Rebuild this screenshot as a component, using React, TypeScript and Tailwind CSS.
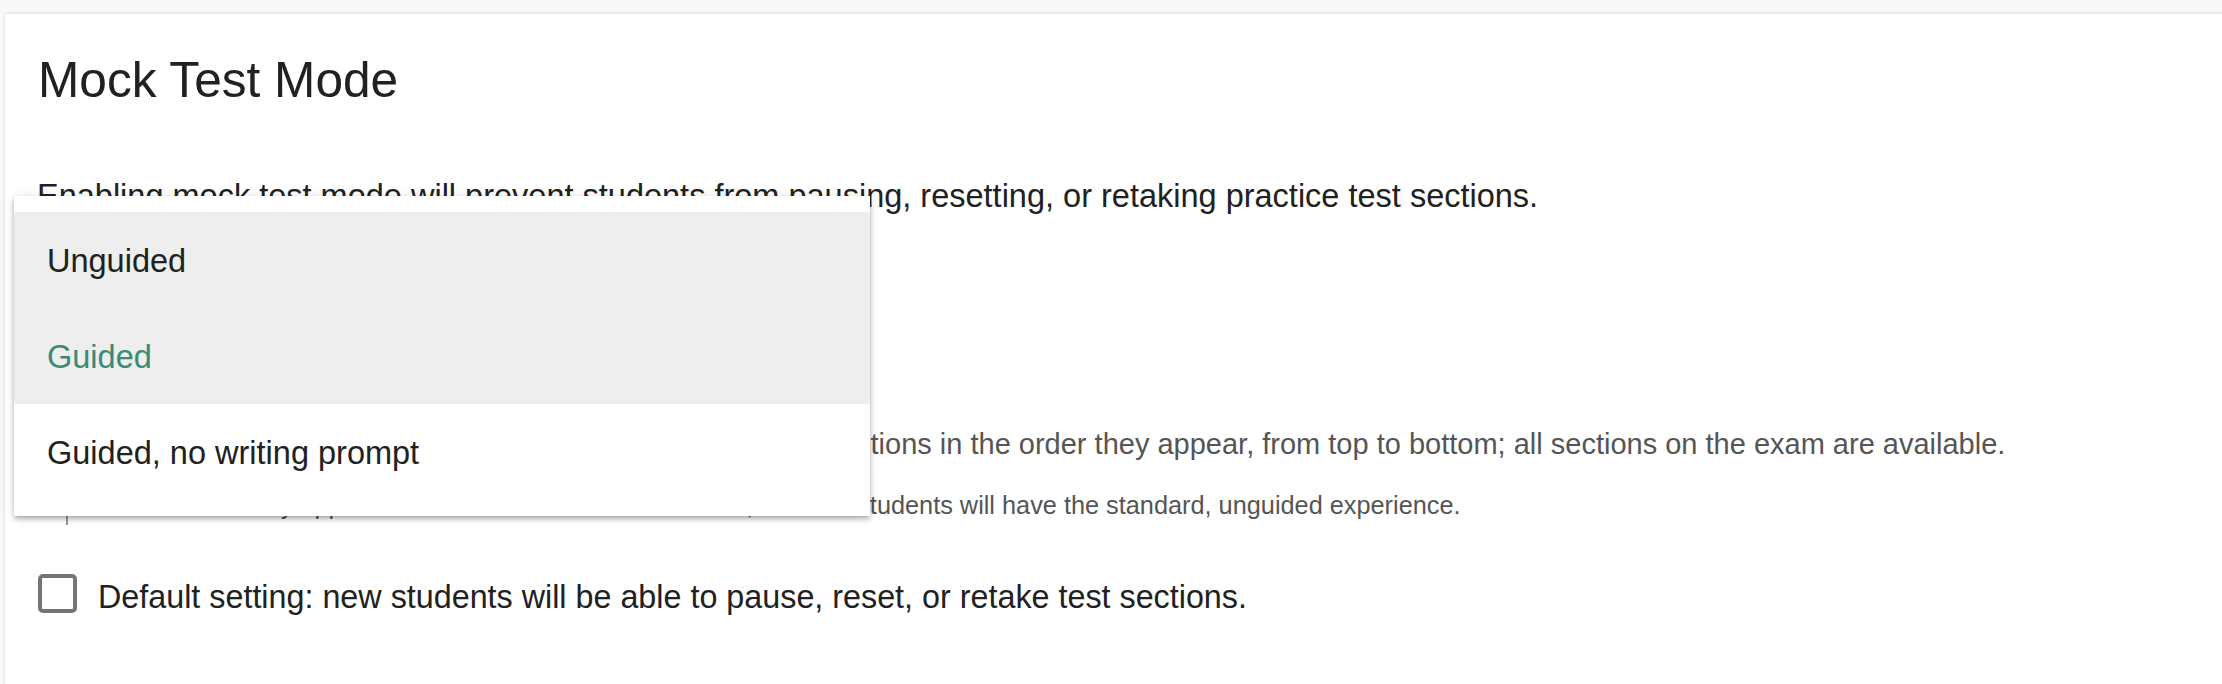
import React from "react";

const FONT = { fontFamily: '"Liberation Sans", Arial, Helvetica, sans-serif' };

const OPTIONS = [
  { label: "Unguided", active: true, selected: false },
  { label: "Guided", active: true, selected: true },
  { label: "Guided, no writing prompt", active: false, selected: false },
];

function GuidedMenu() {
  return (
    <div className="absolute left-[9px] top-[182px] z-10 w-[856px] bg-white py-[16px] shadow-[0_2px_4px_-1px_rgba(0,0,0,0.2),0_4px_5px_0_rgba(0,0,0,0.14),0_1px_10px_0_rgba(0,0,0,0.12)]">
      {OPTIONS.map((opt) => (
        <div
          key={opt.label}
          className={
            "flex h-[96px] items-center pl-[33px] pt-[2px] text-[32.5px] " +
            (opt.active ? "bg-[#eeeeee] " : "bg-white ") +
            (opt.selected ? "text-[#3a8a78]" : "text-[#212121]")
          }
        >
          {opt.label}
        </div>
      ))}
    </div>
  );
}

export default function App() {
  return (
    <div
      className="h-[684px] w-full overflow-hidden bg-[#f8f8f8] pt-[14px] pl-[5px]"
      style={FONT}
    >
      <section className="relative mr-[-20px] h-[700px] bg-white pl-[32px] pt-[38px] shadow-[0_0_3px_rgba(0,0,0,0.16)]">
        <h1 className="ml-[1px] text-[49.6px] leading-[56px] font-normal text-[#212121]">
          Mock Test Mode
        </h1>

        <p className="mt-[64px] text-[32.5px] leading-[48px] text-[#212121]">
          Enabling mock test mode will prevent students from pausing, resetting, or retaking practice test sections.
        </p>

        {/* select field, covered by the open menu */}
        <div className="h-[202px] pt-[24px]">
          <div className="text-[24px] leading-[32px] text-[#757575]">Guided mode</div>
          <div className="mt-[8px] w-[600px] border-b-2 border-[#9e9e9e] pb-[10px] text-[32.5px] leading-[48px] text-[#212121]">
            Guided
          </div>
        </div>

        <p className="pl-[387px] text-[29px] leading-[44px] text-[#555555]">
          Guided: students will complete sections in the order they appear, from top to bottom; all sections on the exam are available.
        </p>

        <p className="mt-[19px] ml-[29px] border-l-2 border-[#9a9a9a] pl-[20px] text-[25.3px] leading-[40px] text-[#555555]">
          Guided mode only applies to sections that have not started; all other students will have the standard, unguided experience.
        </p>

        <label className="mt-[49px] flex items-start gap-[21px]">
          <span className="ml-[1px] block h-[39px] w-[39px] shrink-0 rounded-[5px] border-[4px] border-[#757575] bg-white" />
          <span className="mt-[3px] text-[32.3px] leading-[40px] text-[#212121]">
            Default setting: new students will be able to pause, reset, or retake test sections.
          </span>
        </label>

        <GuidedMenu />
      </section>
    </div>
  );
}
